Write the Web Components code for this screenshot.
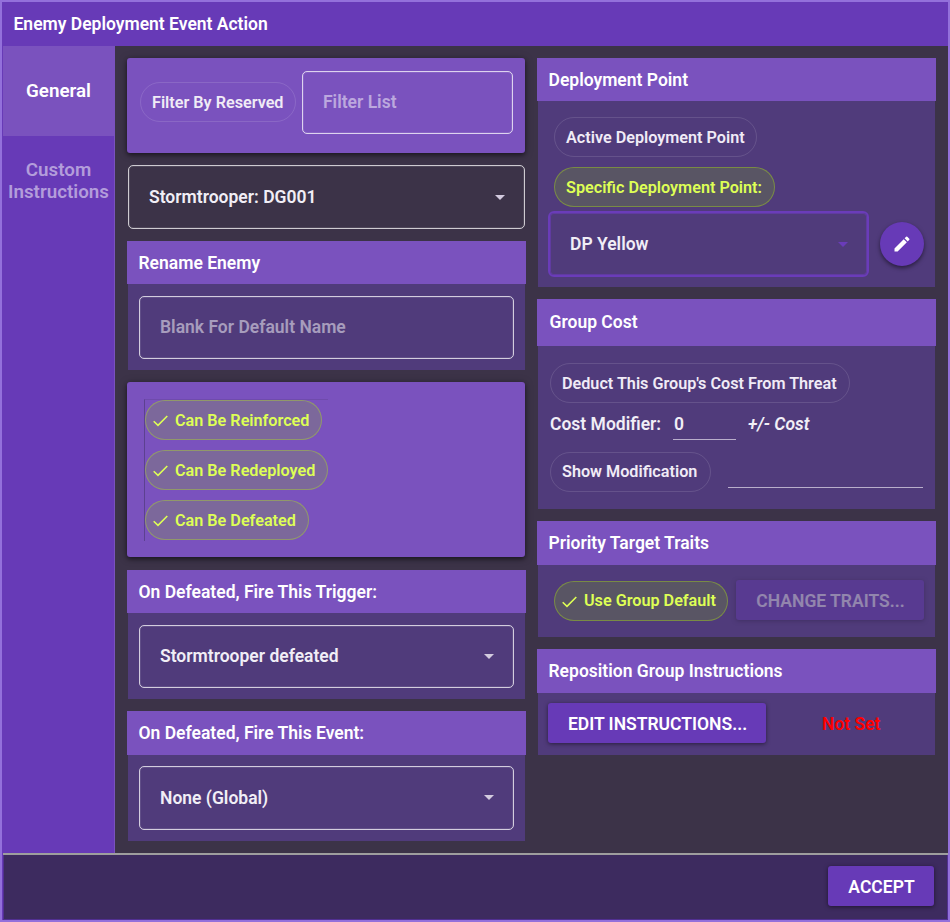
<!DOCTYPE html>
<html lang="en">
<head>
<meta charset="utf-8">
<title>Enemy Deployment Event Action</title>
<style>
  html, body { margin: 0; height: 100%; }
  body {
    --primary: #673ab7;
    --light: #7a52be;
    --surface: #3c3348;
    --panel: #503b7b;
    --lime: #deff55;
    font: 560 17.5px/22px Roboto, "Liberation Sans", sans-serif;
    color: #fff;
    overflow: hidden;
  }
  .column { display: flex; flex-direction: column; gap: 12px; width: 399px; }
  .filter { display: flex; padding: 13px 11.5px 0 13px; height: 82px; gap: 6px; }
  .filter ui-chip { margin-top: 11px; }
  .flags { margin: 17px 0 0 17px; width: 184px; height: 142px; box-sizing: border-box;
           border-left: 1px solid #5c4190; border-top: 1px solid #6f4bac;
           display: flex; flex-direction: column; align-items: flex-start; gap: 10px; }
  .deploy { display: flex; flex-direction: column; align-items: flex-start; gap: 10px; padding: 16px 16px 0; }
  .point { display: flex; align-items: center; gap: 11px; padding: 4px 10px 10px; }
  .cost { display: grid; grid-template-columns: auto 1fr; padding: 17px 12px 17px 12px; }
  .cost ui-chip { justify-self: start; }
  .modifier { grid-column: 1 / 3; display: flex; height: 49px; padding-top: 3px; box-sizing: border-box; color: #f1eef6; }
  .traits { display: flex; padding: 15px 11px 16px 16px; gap: 8px; align-items: flex-start; }
  .traits ui-chip { margin-top: 1px; }
  .instructions { display: flex; align-items: center; padding: 10px 10px 12px; }
  .unset { color: #f00; margin: 2px 0 0 56px; }
</style>
</head>
<body>
<ui-window heading="Enemy Deployment Event Action">
  <ui-tab slot="tabs" active>General</ui-tab>
  <ui-tab slot="tabs">Custom Instructions</ui-tab>

  <div class="column">
    <ui-card style="height:95px">
      <div class="filter">
        <ui-chip style="width:156px">Filter By Reserved</ui-chip>
        <ui-field placeholder="Filter List" style="flex:1"></ui-field>
      </div>
    </ui-card>
    <ui-select style="margin:0 1px;height:64px">Stormtrooper: DG001</ui-select>
    <ui-panel style="height:129px">
      <span slot="title">Rename Enemy</span>
      <ui-field placeholder="Blank For Default Name" style="margin:12px 11px 0"></ui-field>
    </ui-panel>
    <ui-card style="height:175px;margin-bottom:1px">
      <div class="flags">
        <ui-chip on check style="width:177px">Can Be Reinforced</ui-chip>
        <ui-chip on check style="width:183px">Can Be Redeployed</ui-chip>
        <ui-chip on check style="width:164px">Can Be Defeated</ui-chip>
      </div>
    </ui-card>
    <ui-panel style="height:129px">
      <span slot="title">On Defeated, Fire This Trigger:</span>
      <ui-select style="margin:12px 11px 0">Stormtrooper defeated</ui-select>
    </ui-panel>
    <ui-panel style="height:130px;--head:44px">
      <span slot="title">On Defeated, Fire This Event:</span>
      <ui-select style="margin:11px 11px 0;height:64px;--caret-lift:-1px">None (Global)</ui-select>
    </ui-panel>
  </div>

  <div class="column">
    <ui-panel style="height:229px">
      <span slot="title">Deployment Point</span>
      <div class="deploy">
        <ui-chip style="width:203px">Active Deployment Point</ui-chip>
        <ui-chip on style="width:221px">Specific Deployment Point:</ui-chip>
      </div>
      <div class="point">
        <ui-select focused style="width:321px;height:66px">DP Yellow</ui-select>
        <ui-fab></ui-fab>
      </div>
    </ui-panel>
    <ui-panel style="height:210px;--head:47px;--indent:12.5px;--lift:1px">
      <span slot="title">Group Cost</span>
      <div class="cost">
        <ui-chip style="grid-column:1/3;width:300px">Deduct This Group's Cost From Threat</ui-chip>
        <div class="modifier">
          <span style="margin-top:7px;width:123px">Cost Modifier:</span>
          <ui-line style="width:63px;height:34px">0</ui-line>
          <i style="margin:7px 0 0 12px">+/- Cost</i>
        </div>
        <ui-chip style="width:161px;--text-top:0px">Show Modification</ui-chip>
        <ui-line style="margin-left:17px;height:36px"></ui-line>
      </div>
    </ui-panel>
    <ui-panel style="height:116px;--head:44px">
      <span slot="title">Priority Target Traits</span>
      <div class="traits">
        <ui-chip on check style="width:174px;--text-top:0px">Use Group Default</ui-chip>
        <ui-button disabled style="flex:1">CHANGE TRAITS...</ui-button>
      </div>
    </ui-panel>
    <ui-panel style="height:106px;--head:44px">
      <span slot="title">Reposition Group Instructions</span>
      <div class="instructions">
        <ui-button style="width:218px">EDIT INSTRUCTIONS...</ui-button>
        <span class="unset">Not Set</span>
      </div>
    </ui-panel>
  </div>

  <ui-button slot="actions" style="width:106px">ACCEPT</ui-button>
</ui-window>

<script>
  const define = (name, html, setup) => {
    const template = document.createElement('template');
    template.innerHTML = html;
    customElements.define(name, class extends HTMLElement {
      constructor() {
        super();
        this.attachShadow({ mode: 'open' }).append(template.content.cloneNode(true));
      }
      connectedCallback() { if (setup) setup(this, this.shadowRoot); }
    });
  };

  define('ui-window', `
    <style>
      :host { display: flex; flex-direction: column; box-sizing: border-box; width: 950px; height: 922px;
              border: 2px solid #9370db; background: var(--primary); }
      header { height: 44px; box-sizing: border-box; padding: 11px 0 0 11.5px; background: var(--primary); }
      main { display: flex; height: 807px; background: var(--surface); }
      nav { width: 111px; padding-left: 1px; background: var(--primary); border-right: 1px solid var(--light); }
      .content { display: flex; gap: 11px; padding: 12px 0 0 12px; }
      footer { display: flex; justify-content: flex-end; box-sizing: border-box; margin-left: 1px; height: 65px;
               padding: 11px 13px 0 0; background: #3d2b5f; border: solid #512f92; border-width: 0 1px 1px 1px; }
      hr { margin: 0 0 0 1px; height: 2px; border: 0; background: #9e9e9e; }
    </style>
    <header></header>
    <main><nav><slot name="tabs"></slot></nav><div class="content"><slot></slot></div></main>
    <hr>
    <footer><slot name="actions"></slot></footer>`,
    (el, root) => root.querySelector('header').textContent = el.getAttribute('heading'));

  define('ui-tab', `
    <style>
      :host { display: flex; align-items: center; justify-content: center; text-align: center; height: 90px;
              font-size: 18.8px; font-weight: 600; color: #b39ddb; }
      :host([active]) { background: var(--light); color: #fff; }
    </style><span><slot></slot></span>`);

  define('ui-card', `
    <style>
      :host { width: 397.5px; margin-right: 1.5px; border-radius: 3px; background: var(--light);
              box-shadow: 0 2px 4px rgba(0,0,0,.45), 0 1px 8px rgba(0,0,0,.25); display: flow-root; }
    </style><slot></slot>`);

  define('ui-panel', `
    <style>
      :host { display: flex; flex-direction: column; }
      .head { flex: none; display: flex; height: var(--head, 43px); box-sizing: border-box;
              padding: 11px 0 0 var(--indent, 11.5px); background: var(--light); }
      .head span { margin-top: var(--lift, 0px); }
      .body { flex: 1; margin: 0 1px; background: var(--panel); display: flow-root; }
    </style>
    <div class="head"><span><slot name="title"></slot></span></div>
    <div class="body"><slot></slot></div>`);

  define('ui-field', `
    <style>
      :host { display: flex; align-items: center; box-sizing: border-box; height: 63px; padding: 0 0 1px 20px;
              border: 1px solid rgba(255,255,255,.75); border-radius: 5px; color: rgba(255,255,255,.5);
              box-shadow: inset 0 0 0 1px rgba(255,255,255,.1); }
    </style><span></span>`,
    (el, root) => root.querySelector('span').textContent = el.getAttribute('placeholder'));

  define('ui-select', `
    <style>
      :host { display: flex; align-items: center; justify-content: space-between; box-sizing: border-box;
              height: 63px; padding: 0 19px 0 20px; border: 1px solid rgba(255,255,255,.75); border-radius: 5px;
              color: #f1eef6; --caret: #d3cbdf; box-shadow: inset 0 0 0 1px rgba(255,255,255,.1); }
      :host([focused]) { border: 2px solid #6a3cb9; border-radius: 6px; --caret: #6a3cb9; padding: 0 19px 0 20px;
              box-shadow: inset 0 0 0 1px rgba(106,60,185,.6); }
      span { margin-top: -1px; }
      svg { display: block; fill: var(--caret); margin-top: var(--caret-lift, 0px); }
    </style>
    <span><slot></slot></span><svg width="10" height="5"><path d="M0 0h10L5 5z"/></svg>`);

  define('ui-chip', `
    <style>
      :host { display: inline-flex; flex: none; align-items: center; box-sizing: border-box; height: 40px; padding: 0 11px;
              border: 1px solid rgba(255,255,255,.12); border-radius: 20px;
              font-size: 16.2px; font-weight: 600; color: #f0ebf6; white-space: nowrap; }
      :host([on]) { background: rgba(131,205,0,.18); border-color: rgba(190,255,0,.32); color: var(--lime); }
      span { margin-top: var(--text-top, 1px); }
      svg { display: none; margin: 1px 7px 0 -4px; fill: none; stroke: currentColor; stroke-width: 1.6; }
      :host([check]) svg { display: block; }
    </style>
    <svg width="15" height="12"><path d="M.7 6.2 5 10.4 14.3 1"/></svg><span><slot></slot></span>`);

  define('ui-line', `
    <style>
      :host { display: flex; align-items: center; box-sizing: border-box; border-bottom: 1px solid #b9aecb;
              padding: 3px 0 0 1px; }
    </style><slot></slot>`);

  define('ui-button', `
    <style>
      :host { display: flex; align-items: center; justify-content: center; box-sizing: border-box; height: 40px;
              padding: 2px 0 0 1px;
              border-radius: 3px; background: var(--primary); box-shadow: 0 1px 4px rgba(0,0,0,.5); }
      :host([disabled]) { opacity: .38; }
    </style><slot></slot>`);

  define('ui-fab', `
    <style>
      :host { display: flex; align-items: center; justify-content: center; width: 44px; height: 44px;
              border-radius: 50%; background: var(--primary); box-shadow: 0 2px 4px rgba(0,0,0,.5); }
      svg { fill: #fff; }
    </style>
    <svg width="20" height="20" viewBox="0 0 24 24"><path d="M3 17.25V21h3.75L17.81 9.94l-3.75-3.75L3 17.25zM20.71 7.04a1 1 0 0 0 0-1.41l-2.34-2.34a1 1 0 0 0-1.41 0l-1.83 1.83 3.75 3.75 1.83-1.83z"/></svg>`);
</script>
</body>
</html>
